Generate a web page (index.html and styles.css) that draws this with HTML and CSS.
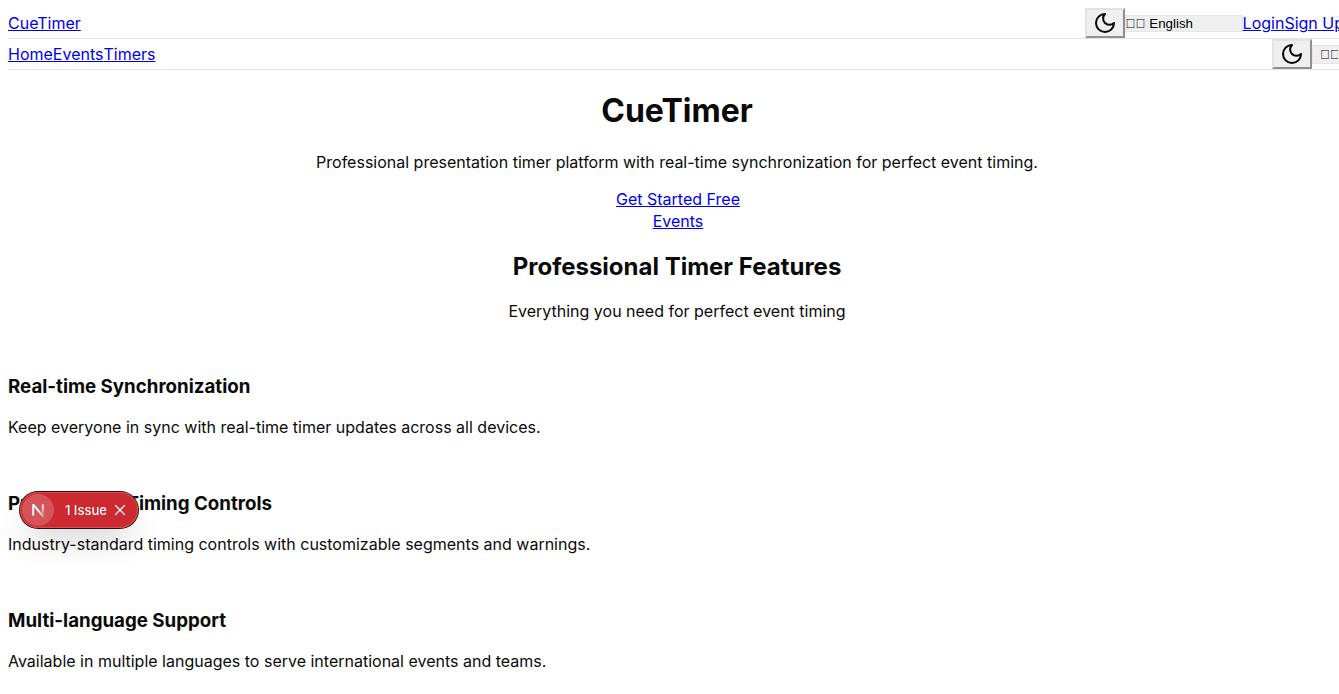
FILE: index.html
```html
<!DOCTYPE html>
<html lang="en">
<head>
<meta charset="utf-8">
<title>CueTimer</title>
<link rel="stylesheet" href="styles.css">
</head>
<body>
<header class="bar bar-top">
  <a href="#">CueTimer</a>
  <div class="bar-group">
    <button class="theme-toggle" type="button" aria-label="Toggle theme">
      <svg class="icon" viewBox="0 0 24 24"><path d="M12 3a6 6 0 0 0 9 9 9 9 0 1 1-9-9Z"/></svg>
    </button>
    <select class="language" aria-label="Language"><option>&#xE5E5;&#xE5E5; English</option></select>
    <a href="#">Login</a><a href="#">Sign Up</a>
  </div>
</header>
<nav class="bar">
  <div class="bar-group"><a href="#">Home</a><a href="#">Events</a><a href="#">Timers</a></div>
  <div class="bar-group">
    <button class="theme-toggle" type="button" aria-label="Toggle theme">
      <svg class="icon" viewBox="0 0 24 24"><path d="M12 3a6 6 0 0 0 9 9 9 9 0 1 1-9-9Z"/></svg>
    </button>
    <select class="language language-compact" aria-label="Language"><option>&#xE5E5;&#xE5E5;</option></select>
  </div>
</nav>
<main>
  <section class="hero">
    <h1>CueTimer</h1>
    <p>Professional presentation timer platform with real-time synchronization for perfect event timing.</p>
    <div class="actions">
      <div><a href="#">Get Started Free</a></div>
      <div><a href="#">Events</a></div>
    </div>
  </section>
  <section class="hero">
    <h2>Professional Timer Features</h2>
    <p>Everything you need for perfect event timing</p>
  </section>
  <section class="features">
    <article class="feature">
      <h3>Real-time Synchronization</h3>
      <p>Keep everyone in sync with real-time timer updates across all devices.</p>
    </article>
    <article class="feature">
      <h3>Professional Timing Controls</h3>
      <p>Industry-standard timing controls with customizable segments and warnings.</p>
    </article>
    <article class="feature">
      <h3>Multi-language Support</h3>
      <p>Available in multiple languages to serve international events and teams.</p>
    </article>
  </section>
</main>
<aside class="issues">
  <button class="issues-logo" type="button" aria-label="Open developer tools">
    <svg viewBox="0 0 40 40" fill="none">
      <defs>
        <linearGradient id="diagonal" x1="22" y1="22" x2="29" y2="31" gradientUnits="userSpaceOnUse"><stop stop-color="#fff"/><stop offset="1" stop-color="#fff" stop-opacity="0"/></linearGradient>
        <linearGradient id="stem" x1="26" y1="14" x2="26" y2="29" gradientUnits="userSpaceOnUse"><stop stop-color="#fff"/><stop offset="1" stop-color="#fff" stop-opacity="0"/></linearGradient>
      </defs>
      <path d="M14 13L27 29" stroke="url(#diagonal)" stroke-width="2.400"/>
      <path d="M14 27V13" stroke="#fff" stroke-width="2.400"/>
      <path d="M26 13V26" stroke="url(#stem)" stroke-width="2.400"/>
    </svg>
  </button>
  <button class="issues-label" type="button">1 Issue</button>
  <button class="issues-close" type="button" aria-label="Dismiss">
    <svg viewBox="0 0 12 12"><path d="M1.500 1.500L10.500 10.500M10.500 1.500L1.500 10.500"/></svg>
  </button>
</aside>
</body>
</html>
```
FILE: styles.css
```css
html {
  overflow: hidden;
}
body {
  margin: 8px -7px 8px 8px;
  font-family: Inter, sans-serif;
  font-size: 16px;
  line-height: 22px;
  color: #0a0a0a;
  background: #fff;
}
a {
  color: #0000ee;
}
.bar {
  display: flex;
  align-items: center;
  justify-content: space-between;
  border-bottom: 1px solid #e5e5e5;
}
.bar-top {
  padding-right: 2px;
}
.bar-group {
  display: flex;
  align-items: center;
  flex-shrink: 0;
}
.theme-toggle {
  display: flex;
  padding: 1px 6px;
  border: 2px solid;
  border-color: #e3e3e3 #8f8f8f #8f8f8f #e3e3e3;
  background: #efefef;
  color: #000;
}
.icon {
  width: 24px;
  height: 24px;
  fill: none;
  stroke: currentColor;
  stroke-width: 2;
  stroke-linecap: round;
  stroke-linejoin: round;
}
.language {
  appearance: none;
  width: 118px;
  padding: 0;
  border: 1px solid #e5e5e5;
  border-radius: 0;
  background: #efefef;
  font-family: "Liberation Sans", Arial, sans-serif;
  color: #000;
}
.language-compact {
  width: 34px;
  padding: 1px 7px;
}
.hero {
  text-align: center;
}
.actions {
  padding-left: 2px;
}
h1 {
  margin: 21px 0;
  font-size: 32px;
  line-height: 39px;
}
h2 {
  margin: 20px 0 18px;
  font-size: 24px;
  line-height: 30px;
}
h3 {
  margin: 0 0 18px;
  line-height: 22px;
}
p {
  margin: 0 0 16px;
}
.hero p {
  margin-bottom: 15px;
}
.feature {
  padding-top: 39px;
}
.issues {
  position: fixed;
  left: 20px;
  bottom: 166px;
  display: flex;
  align-items: center;
  height: 36px;
  padding-right: 12px;
  box-sizing: border-box;
  border-radius: 18px;
  background: #ca2a30;
  box-shadow: 0 0 0 1px #171717, inset 0 0 0 1px #e5484d, 0 16px 32px -8px rgba(0, 0, 0, .24);
}
.issues button {
  padding: 0;
  border: 0;
  background: none;
  color: #fff;
}
.issues .issues-logo {
  width: 32px;
  height: 32px;
  margin: 0 11px 0 2px;
  border-radius: 50%;
  background: rgba(255, 255, 255, .2);
}
.issues-logo svg {
  display: block;
  width: 32px;
  height: 32px;
}
.issues .issues-label {
  font-family: Inter, sans-serif;
  font-size: 13px;
  font-weight: 500;
  line-height: 16px;
}
.issues .issues-close {
  width: 12px;
  height: 12px;
  margin-left: 7px;
}
.issues-close svg {
  display: block;
  stroke: #fff;
  stroke-width: 1.200;
  stroke-linecap: round;
}
```
